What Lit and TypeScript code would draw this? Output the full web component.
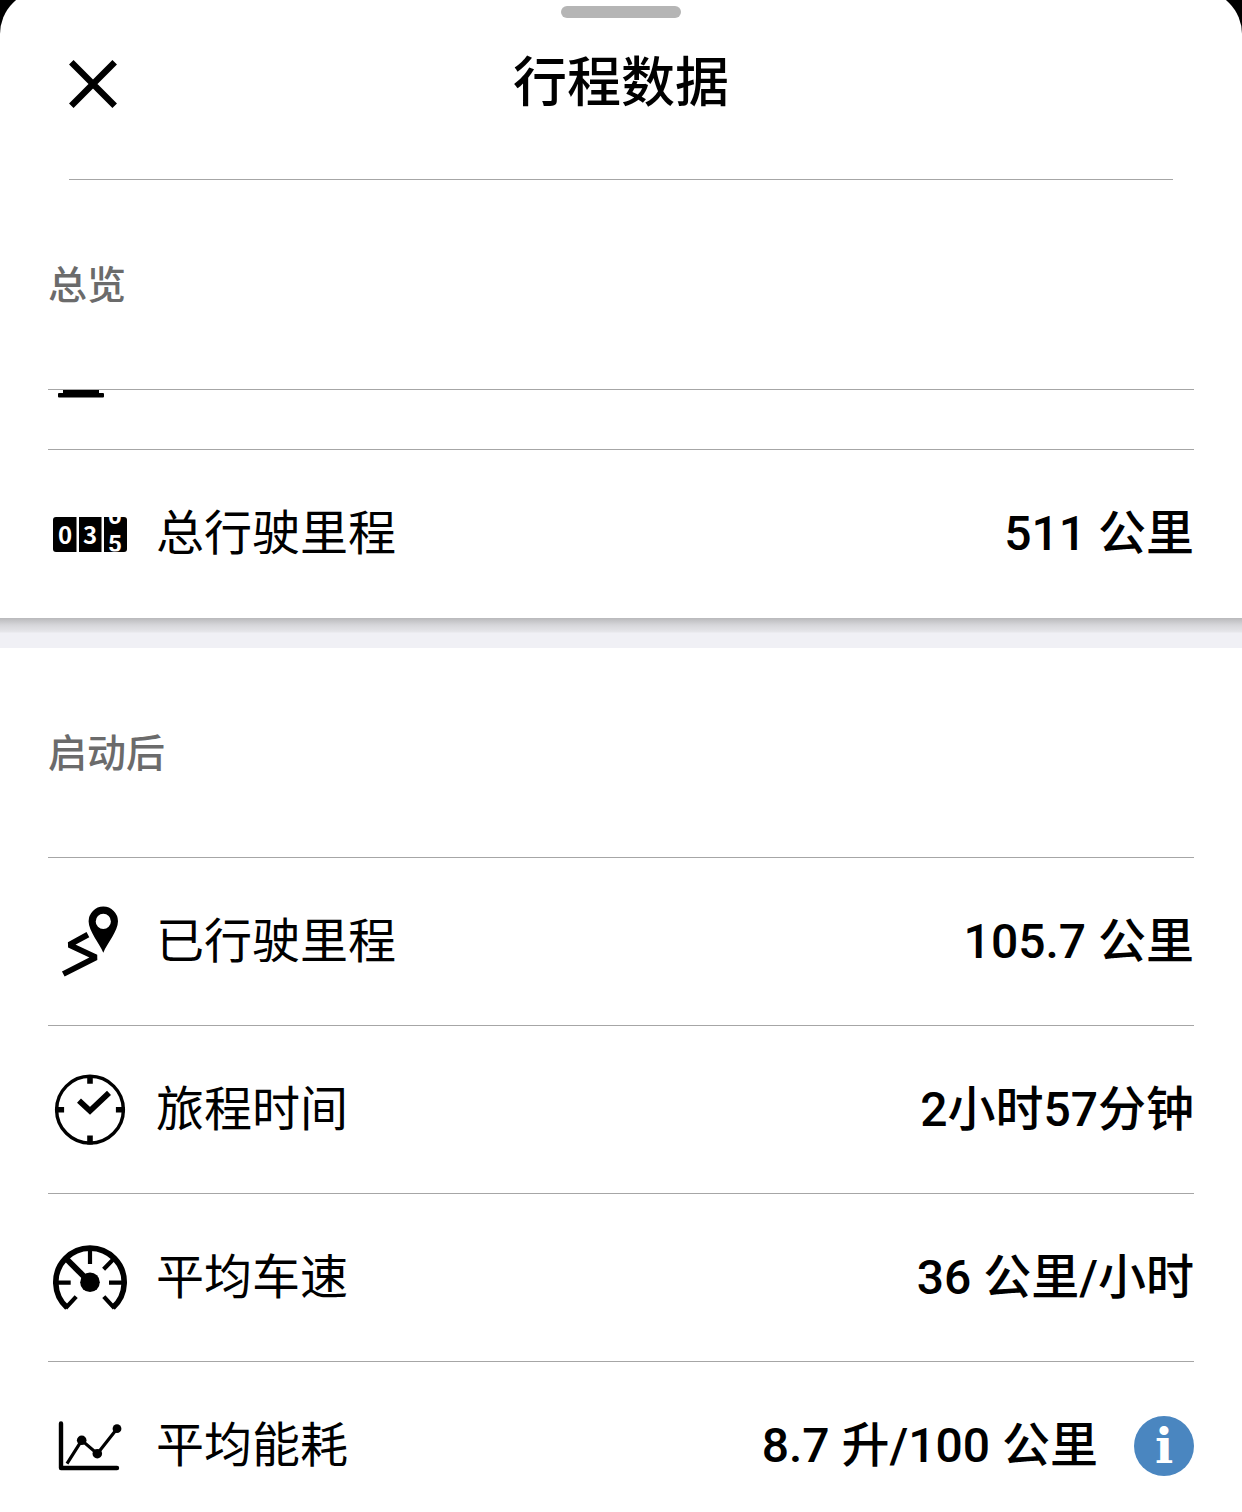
import { LitElement, html, svg, css, nothing, type SVGTemplateResult } from "lit";
import { customElement, property } from "lit/decorators.js";

type IconName = "odometer" | "route" | "clock" | "gauge" | "chart";

interface Metric {
  icon: IconName;
  label: string;
  value: string;
  info?: boolean;
}

const icons: Record<IconName, SVGTemplateResult> = {
  odometer: svg`
    <defs>
      <clipPath id="drum"><rect x="56" y="26" width="23" height="34.5" /></clipPath>
    </defs>
    <path d="M8 26H28.5V61H8a3 3 0 0 1-3-3V29a3 3 0 0 1 3-3z" />
    <path d="M31 26H53.5V61H31z" />
    <path d="M56 26H76a3 3 0 0 1 3 3V58a3 3 0 0 1-3 3H56z" />
    <g class="digits">
      <text x="17" y="53">0</text>
      <text x="42" y="53">3</text>
      <g class="rolling" clip-path="url(#drum)">
        <text x="67" y="33">0</text>
        <text x="67" y="61">5</text>
      </g>
    </g>`,
  route: svg`
    <path
      fill-rule="evenodd"
      d="M55.3 53.7C51.5 44.5 40.6 32 40.6 22.3a14.7 14.7 0 0 1 29.4 0C70 32 59.1 44.5 55.3 53.7zM55.3 14.8a7.6 7.6 0 1 0 0 15.2a7.6 7.6 0 1 0 0-15.2z"
    />
    <path class="line" stroke-width="5.8" stroke-linejoin="bevel" d="M39.9 35.6L21.3 45.8L48 58.3L15.3 75" />`,
  clock: svg`
    <circle class="line" cx="42" cy="42.7" r="33.4" stroke-width="3.4" />
    <path class="line" stroke-width="5.6" d="M42 8v8.8M42 77.4v-8.8M7.3 42.7h8.8M76.7 42.7h-8.8" />
    <path class="line" stroke-width="5.8" d="M31 33.6L42 43.8L61 25.8" />`,
  gauge: svg`
    <path class="line" stroke-width="5.6" d="M19.1 72.7A34.2 34.2 0 1 1 64.9 72.7" />
    <path
      class="line"
      stroke-width="4.2"
      d="M17.6 73.2L28.2 61.6M66.4 73.2L55.8 61.6M9 47.7H22.7M75 47.7H61M42 14V29M55.6 34.2L66.6 23"
    />
    <path class="line" stroke-width="6" d="M19 24.5L42 47.5" />
    <circle cx="42" cy="47.3" r="9.8" />`,
  chart: svg`
    <path class="line" stroke-width="4.4" stroke-linecap="round" stroke-linejoin="round" d="M13 20.5V65H69" />
    <path class="line" stroke-width="3.2" d="M19 60.6L33.7 37.3L49.3 50.7L69 25.7" />
    <circle cx="33.7" cy="37.3" r="4.8" />
    <circle cx="49.3" cy="50.7" r="4.8" />
    <circle cx="69" cy="25.7" r="4.4" />`,
};

@customElement("metric-row")
export class MetricRow extends LitElement {
  @property({ attribute: false }) metric!: Metric;

  static styles = css`
    :host {
      display: flex;
      align-items: center;
      box-sizing: border-box;
      min-height: 168px;
      border-top: 1px solid #a6a6a6;
      font-size: 48px;
      line-height: 72px;
    }
    .icon {
      flex: none;
      width: 84px;
      height: 85px;
      margin-right: 24px;
    }
    .line {
      fill: none;
      stroke: #000;
    }
    .digits {
      fill: #fff;
      font-family: "Noto Sans CJK SC", sans-serif;
      font-size: 24px;
      font-weight: 700;
      text-anchor: middle;
    }
    .rolling {
      font-family: Roboto, sans-serif;
    }
    .label {
      flex: 1;
      font-weight: 400;
    }
    .value {
      font-weight: 500;
    }
    .info {
      flex: none;
      width: 60px;
      height: 60px;
      margin-left: 36px;
      padding: 0;
      border: 0;
      border-radius: 50%;
      background: #4a86c0;
      color: #fff;
      font: 700 48px/60px "DejaVu Serif", serif;
      text-align: center;
    }
  `;

  render() {
    const { icon, label, value, info } = this.metric;
    return html`
      <svg class="icon" viewBox="0 0 84 85" aria-hidden="true">${icons[icon]}</svg>
      <span class="label">${label}</span>
      <span class="value">${value}</span>
      ${info ? html`<button class="info" type="button">i</button>` : nothing}
    `;
  }
}

@customElement("app-root")
export class AppRoot extends LitElement {
  private overview: Metric[] = [{ icon: "odometer", label: "总行驶里程", value: "511 公里" }];

  private sinceStart: Metric[] = [
    { icon: "route", label: "已行驶里程", value: "105.7 公里" },
    { icon: "clock", label: "旅程时间", value: "2小时57分钟" },
    { icon: "gauge", label: "平均车速", value: "36 公里/小时" },
    { icon: "chart", label: "平均能耗", value: "8.7 升/100 公里", info: true },
  ];

  static styles = css`
    :host {
      display: flex;
      flex-direction: column;
      min-height: 100vh;
      overflow: hidden;
      background: #000;
      color: #000;
      font-family: Roboto, "Noto Sans CJK SC", sans-serif;
    }
    .sheet {
      flex: 1;
      margin-top: -10px;
      padding-top: 16px;
      border-radius: 44px 44px 0 0;
      background: #fff;
    }
    .handle {
      width: 120px;
      height: 12px;
      margin: 0 auto;
      border-radius: 6px;
      background: #b5b5b5;
    }
    .header {
      display: grid;
      grid-template-columns: 48px 1fr 48px;
      align-items: center;
      box-sizing: border-box;
      height: 162px;
      margin: 0 69px;
      padding-bottom: 30px;
      border-bottom: 1px solid #a6a6a6;
    }
    .close {
      width: 48px;
      height: 48px;
      padding: 0;
      border: 0;
      background: none;
    }
    .close svg {
      display: block;
    }
    .title {
      margin: 0;
      font-size: 54px;
      font-weight: 500;
      line-height: 80px;
      text-align: center;
    }
    .section {
      padding: 0 48px;
    }
    .section-title {
      margin: 0;
      padding: 76px 0 73px;
      color: #6b6b6b;
      font-size: 39px;
      font-weight: 500;
      line-height: 60px;
    }
    .scrolled {
      height: 59px;
      border-top: 1px solid #a6a6a6;
    }
    .scrolled svg {
      display: block;
    }
    .band {
      height: 30px;
      margin-top: 1px;
      background: linear-gradient(#b9b9bb, #d6d6da 7px, #e6e6ea 14px, #f0f0f5 15px);
    }
  `;

  render() {
    return html`
      <main class="sheet">
        <div class="handle"></div>
        <header class="header">
          <button class="close" type="button" aria-label="关闭">
            <svg width="48" height="48" viewBox="0 0 48 48" aria-hidden="true">
              <path d="M2.3 2.3L45.7 45.7M45.7 2.3L2.3 45.7" stroke="#000" stroke-width="6.4" />
            </svg>
          </button>
          <h1 class="title">行程数据</h1>
        </header>
        <section class="section">
          <h2 class="section-title">总览</h2>
          <div class="scrolled">
            <svg width="84" height="8" viewBox="0 0 84 8" aria-hidden="true">
              <path d="M15 0H51V3H55a1 1 0 0 1 1 1V6.5a1 1 0 0 1-1 1H11a1 1 0 0 1-1-1V4a1 1 0 0 1 1-1H15z" />
            </svg>
          </div>
          ${this.overview.map((m) => html`<metric-row .metric=${m}></metric-row>`)}
        </section>
        <div class="band"></div>
        <section class="section">
          <h2 class="section-title">启动后</h2>
          ${this.sinceStart.map((m) => html`<metric-row .metric=${m}></metric-row>`)}
        </section>
      </main>
    `;
  }
}
